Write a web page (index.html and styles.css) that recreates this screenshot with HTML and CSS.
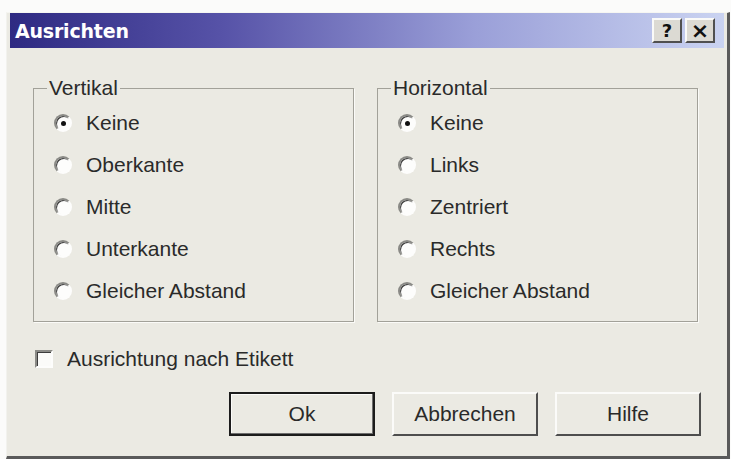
FILE: index.html
```html
<!DOCTYPE html>
<html lang="de">
<head>
<meta charset="utf-8">
<title>Ausrichten</title>
<link rel="stylesheet" href="styles.css">
</head>
<body>
<div class="dialog">
  <div class="titlebar">
    <span class="title">Ausrichten</span>
    <div class="caption-buttons">
      <span class="cap-btn">?</span>
      <span class="cap-btn cap-close">×</span>
    </div>
  </div>
  <div class="content">
    <div class="groups">
      <fieldset class="group">
        <legend>Vertikal</legend>
        <div class="radio checked"><span class="dot"></span><span>Keine</span></div>
        <div class="radio"><span class="dot"></span><span>Oberkante</span></div>
        <div class="radio"><span class="dot"></span><span>Mitte</span></div>
        <div class="radio"><span class="dot"></span><span>Unterkante</span></div>
        <div class="radio"><span class="dot"></span><span>Gleicher Abstand</span></div>
      </fieldset>
      <fieldset class="group">
        <legend>Horizontal</legend>
        <div class="radio checked"><span class="dot"></span><span>Keine</span></div>
        <div class="radio"><span class="dot"></span><span>Links</span></div>
        <div class="radio"><span class="dot"></span><span>Zentriert</span></div>
        <div class="radio"><span class="dot"></span><span>Rechts</span></div>
        <div class="radio"><span class="dot"></span><span>Gleicher Abstand</span></div>
      </fieldset>
    </div>
    <div class="check"><span class="box"></span><span>Ausrichtung nach Etikett</span></div>
    <div class="buttons">
      <div class="btn default"><span>Ok</span></div>
      <div class="btn"><span>Abbrechen</span></div>
      <div class="btn"><span>Hilfe</span></div>
    </div>
  </div>
</div>
</body>
</html>
```

FILE: styles.css
```css
html, body {
  margin: 0;
  padding: 0;
  background: #fbfbfa;
}

body {
  font-family: "Liberation Sans", Arial, sans-serif;
  font-size: 21px;
  color: #2a2a2a;
}

.dialog {
  box-sizing: border-box;
  margin: 12px 0 0 6px;
  width: 724px;
  height: 447px;
  padding: 0 3px 0 3px;
  background: #ebeae3;
  border-style: solid;
  border-width: 1px 3px 3px 1px;
  border-color: #f6f6f2 #5a5a5a #5a5a5a #f2f2ee;
  display: flex;
  flex-direction: column;
}

.titlebar {
  height: 35px;
  display: flex;
  align-items: center;
  justify-content: space-between;
  background: linear-gradient(90deg, #2e2a82 0%, #5753a8 30%, #9a9fd8 65%, #cad3f1 100%);
}

.title {
  font-family: "DejaVu Sans", Verdana, sans-serif;
  font-weight: bold;
  font-size: 19px;
  color: #ffffff;
  padding-left: 5px;
  letter-spacing: -0.2px;
}

.caption-buttons {
  display: flex;
  gap: 3px;
  margin-right: 9px;
}

.cap-btn {
  box-sizing: border-box;
  width: 30px;
  height: 25px;
  display: flex;
  align-items: center;
  justify-content: center;
  background: #dcdad3;
  border: 2px solid;
  border-color: #fafaf8 #505050 #505050 #fafaf8;
  font-family: "DejaVu Sans", Verdana, sans-serif;
  font-weight: bold;
  font-size: 18px;
  color: #111;
  line-height: 1;
}

.cap-close {
  font-size: 22px;
}

.content {
  flex: 1;
  padding: 28px 23px 0 23px;
  display: flex;
  flex-direction: column;
}

.groups {
  display: flex;
  gap: 23px;
}

.group {
  margin: 0;
  width: 321px;
  box-sizing: border-box;
  border: 1px solid #a2a199;
  box-shadow: 1px 1px 0 #fbfbf8;
  padding: 2px 10px 9px 20px;
}

.group legend {
  margin-left: -7px;
  padding: 0 2px;
  line-height: 24px;
}

.radio {
  height: 42px;
  display: flex;
  align-items: center;
  gap: 14px;
}

.radio .dot {
  box-sizing: border-box;
  width: 18px;
  height: 18px;
  border-radius: 50%;
  border: 2px solid;
  border-color: #8a8a86 #fdfdfc #fdfdfc #8a8a86;
  box-shadow: inset 1px 1px 0 #3c3c3c;
  background: #fdfdfc;
  display: flex;
  align-items: center;
  justify-content: center;
}

.radio.checked .dot::after {
  content: "";
  width: 5px;
  height: 5px;
  border-radius: 50%;
  background: #111;
}

.check {
  margin-top: 27px;
  height: 20px;
  display: flex;
  align-items: center;
  gap: 14px;
  padding-left: 2px;
}

.check .box {
  box-sizing: border-box;
  width: 18px;
  height: 18px;
  border: 2px solid;
  border-color: #8a8a86 #fdfdfc #fdfdfc #8a8a86;
  box-shadow: inset 1px 1px 0 #3c3c3c;
  background: #fbfbf9;
}

.buttons {
  margin-top: 23px;
  display: flex;
  justify-content: flex-end;
  gap: 17px;
}

.btn {
  box-sizing: border-box;
  width: 146px;
  height: 44px;
  display: flex;
  align-items: center;
  justify-content: center;
  background: #ebeae3;
  border: 2px solid;
  border-color: #fbfbf9 #4e4e4e #4e4e4e #fbfbf9;
}

.btn.default {
  border: 2px solid #1c1c1c;
  box-shadow: inset -1px -1px 0 #6e6e6e, inset 1px 1px 0 #fbfbf9;
}
```
